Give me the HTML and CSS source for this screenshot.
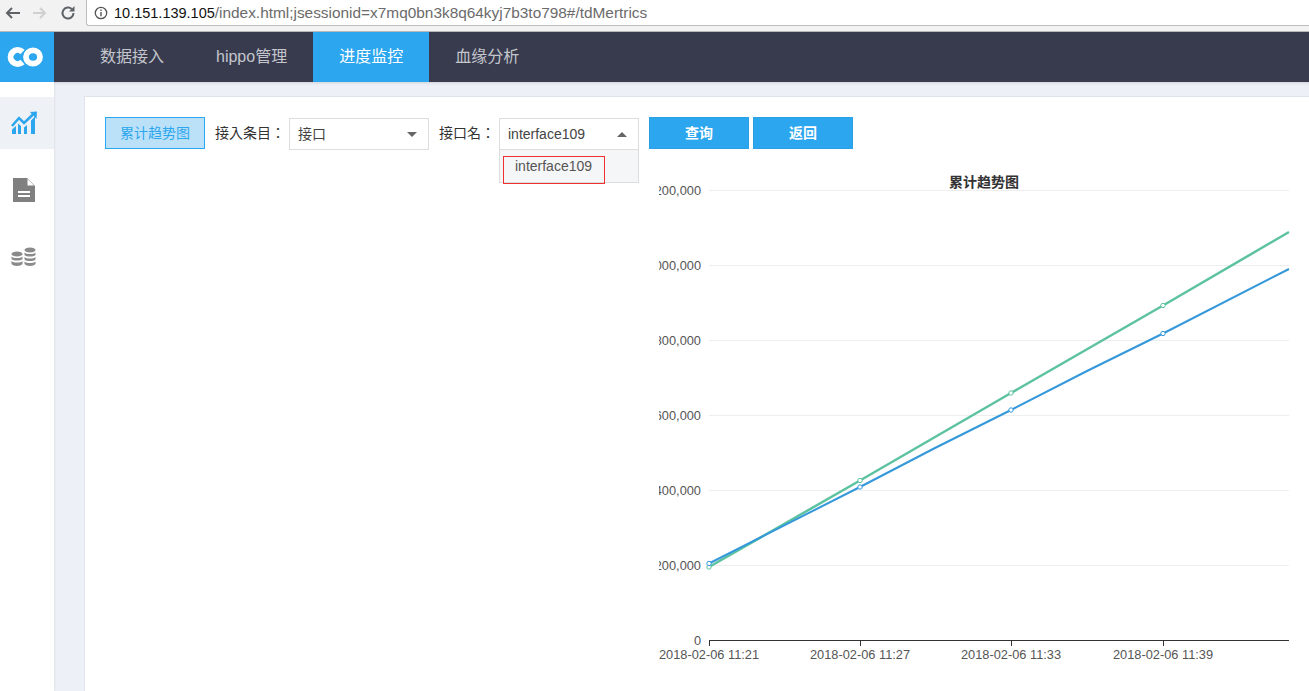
FILE: index.html
```html
<!DOCTYPE html>
<html lang="zh-CN">
<head>
    <meta charset="UTF-8">
    <title>进度监控</title>
    <link rel="stylesheet" href="styles.css">
</head>
<body>
    <div class="browser">
        <div class="browser-btns">
            <svg width="16" height="14" viewBox="0 0 16 14"><path d="M16 7H3M8 2L3 7l5 5" fill="none" stroke="#5f6368" stroke-width="2"/></svg>
            <svg width="16" height="14" viewBox="0 0 16 14"><path d="M1 7h12M8 2l5 5-5 5" fill="none" stroke="#d0d0d0" stroke-width="2"/></svg>
            <svg width="16" height="16" viewBox="0 0 16 16"><path d="M13.500 8a5.500 5.500 0 1 1-1.600-3.900" fill="none" stroke="#5f6368" stroke-width="2"/><path d="M14.500 1v5.500H9z" fill="#5f6368"/></svg>
        </div>
        <div class="urlbar">
            <svg width="14" height="14" viewBox="0 0 14 14"><circle cx="7" cy="7" r="5.700" fill="none" stroke="#555" stroke-width="1.300"/><path d="M7 6v4.200M7 3.600v1.300" stroke="#555" stroke-width="1.400"/></svg>
            <span class="url"><span class="host">10.151.139.105</span>/index.html;jsessionid=x7mq0bn3k8q64kyj7b3to798#/tdMertrics</span>
        </div>
    </div>

    <div class="topnav">
        <div class="logo">
            <svg width="36" height="20" viewBox="0 0 36 20">
                <path d="M15.500 5a7 7 0 1 0 0 10" fill="none" stroke="#fff" stroke-width="6"/>
                <ellipse cx="26" cy="10" rx="7" ry="6.700" fill="none" stroke="#fff" stroke-width="5.800"/>
            </svg>
        </div>
        <a class="nav-item">数据接入</a>
        <a class="nav-item">hippo管理</a>
        <a class="nav-item active">进度监控</a>
        <a class="nav-item">血缘分析</a>
    </div>

    <div class="layout">
        <div class="sidebar">
            <div class="side-item active">
                <svg width="26" height="24" viewBox="0 0 26 24" fill="#2ca6ee">
                    <path d="M1 18.500l4-3.500V23H1zM7 12.500l3 2.500v8H7zM13 16.500l3-2.500v9h-3zM20 9.500l4-4V23h-4z"/>
                    <path d="M1 15l7-8 5 5 9-8.500" fill="none" stroke="#2ca6ee" stroke-width="2.500"/>
                    <path d="M19 1l7-.5-.5 7.500z"/>
                </svg>
            </div>
            <div class="side-item">
                <svg width="22" height="24" viewBox="0 0 22 24">
                    <path d="M0 0h14l8 8v16H0z" fill="#808080"/>
                    <path d="M14.500 1l6.500 6.500h-6.500z" fill="#fff"/>
                    <path d="M5 13h12v2H5zM5 17h12v2H5z" fill="#fff"/>
                </svg>
            </div>
            <div class="side-item">
                <svg width="26" height="20" viewBox="0 0 26 20" fill="#8a8a8a">
                    <ellipse cx="6" cy="7" rx="5.500" ry="2.500"/>
                    <path d="M.5 9.500c2 2 9 2 11 0V12c-2 2-9 2-11 0zM.5 14c2 2 9 2 11 0v3c-2 2.500-9 2.500-11 0z"/>
                    <ellipse cx="19" cy="3" rx="5.500" ry="2.500"/>
                    <path d="M13.500 5.500c2 2 9 2 11 0V8c-2 2-9 2-11 0zM13.500 10c2 2 9 2 11 0v2.500c-2 2-9 2-11 0zM13.500 14.500c2 2 9 2 11 0V17c-2 2.500-9 2.500-11 0z"/>
                </svg>
            </div>
        </div>

        <div class="main">
            <div class="panel">
                <div class="toolbar">
                    <div class="tag">累计趋势图</div>
                    <label class="field-label" lang="zh-TW">接入条目：</label>
                    <div class="select">
                        <span>接口</span>
                        <i class="caret"></i>
                    </div>
                    <label class="field-label" lang="zh-TW">接口名：</label>
                    <div class="select open">
                        <span>interface109</span>
                        <i class="caret up"></i>
                        <div class="dropdown">
                            <div class="option">interface109</div>
                        </div>
                    </div>
                    <button class="btn">查询</button>
                    <button class="btn">返回</button>
                </div>

                <svg class="chart" width="650" height="500" viewBox="659 170 650 500">
                    <text class="chart-title" x="984" y="187">累计趋势图</text>
                    <g class="grid">
                        <path d="M709 190.500H1289M709 265.500H1289M709 340.500H1289M709 415.500H1289M709 490.500H1289M709 565.500H1289"/>
                    </g>
                    <path class="axis" d="M709 640.500H1289M709.500 640v6M860.500 640v6M1011.500 640v6M1163.500 640v6"/>
                    <g class="ylabels">
                        <text x="701" y="195">1,200,000</text>
                        <text x="701" y="270">1,000,000</text>
                        <text x="701" y="345">800,000</text>
                        <text x="701" y="420">600,000</text>
                        <text x="701" y="495">400,000</text>
                        <text x="701" y="570">200,000</text>
                        <text x="701" y="645">0</text>
                    </g>
                    <g class="xlabels">
                        <text x="709" y="659">2018-02-06 11:21</text>
                        <text x="860" y="659">2018-02-06 11:27</text>
                        <text x="1011" y="659">2018-02-06 11:33</text>
                        <text x="1163" y="659">2018-02-06 11:39</text>
                    </g>
                    <polyline class="line green" points="709,567 860,480.500 1011,393 1163,305.500 1289,232"/>
                    <polyline class="line blue" points="709,563.500 860,487 935,448 1011,410 1087,371 1163,333.500 1289,269"/>
                    <g class="dots green-dot">
                        <circle cx="709" cy="567" r="2.200"/>
                        <circle cx="860" cy="480.500" r="2.200"/>
                        <circle cx="1011" cy="393" r="2.200"/>
                        <circle cx="1163" cy="305.500" r="2.200"/>
                    </g>
                    <g class="dots blue-dot">
                        <circle cx="709" cy="563.500" r="2.200"/>
                        <circle cx="860" cy="487" r="2.200"/>
                        <circle cx="1011" cy="410" r="2.200"/>
                        <circle cx="1163" cy="333.500" r="2.200"/>
                    </g>
                </svg>
            </div>
        </div>
    </div>
</body>
</html>
```

FILE: styles.css
```css
* {
    box-sizing: border-box;
}
html, body {
    height: 691px;
    overflow: hidden;
}
body {
    margin: 0;
    font-family: "Liberation Sans", "Noto Sans CJK SC", sans-serif;
    font-size: 14px;
    color: #333;
    background-color: #edf0f6;
}

/* browser chrome */
.browser {
    display: flex;
    height: 32px;
    padding-bottom: 5px;
    background-color: #f2f2f2;
    border-bottom: 1px solid #b8b8b8;
}
.browser-btns {
    flex: none;
    display: flex;
    align-items: center;
    gap: 12px;
    width: 86px;
    padding-left: 4px;
}
.urlbar {
    flex: 1;
    display: flex;
    align-items: center;
    gap: 6px;
    padding-left: 7px;
    background-color: #fff;
    border: 1px solid #bdbdbd;
    border-top: none;
    border-right: none;
    border-radius: 0 0 0 3px;
}
.url {
    font-size: 15.400px;
    color: #6b6b6b;
}
.host {
    font-size: 14.500px;
    color: #111;
}

/* top nav */
.topnav {
    display: flex;
    height: 50px;
    background-color: #383b4e;
}
.logo {
    display: flex;
    align-items: center;
    justify-content: center;
    width: 54px;
    margin-right: 20px;
    padding-right: 4px;
    background-color: #2ca6ee;
}
.nav-item {
    display: flex;
    align-items: center;
    padding: 0 26px 5px;
    font-size: 16px;
    color: #c4c6cc;
}
.nav-item.active {
    color: #fff;
    background-color: #2ca6ee;
}

.layout {
    display: flex;
    height: 609px;
}
.sidebar {
    flex: none;
    width: 54px;
    padding-top: 15px;
    background-color: #fff;
    box-shadow: 1px 0 2px rgba(0,0,0,0.05);
}
.side-item {
    display: flex;
    align-items: center;
    justify-content: center;
    height: 52px;
    margin-bottom: 15px;
    padding-right: 6px;
}
.side-item.active {
    background-color: #eef1f6;
}
.main {
    flex: 1;
    min-width: 0;
    padding: 14px 0 0 30px;
    box-shadow: inset 0 3px 3px -2px rgba(0,0,0,0.12);
}
.panel {
    height: 100%;
    padding: 20px 20px 0;
    background-color: #fff;
    border: 1px solid #dfe4ec;
    border-right: none;
    border-bottom: none;
}

/* toolbar */
.toolbar {
    display: flex;
    align-items: flex-start;
    height: 33px;
}
.toolbar > * {
    flex: none;
}
.tag {
    width: 100px;
    height: 32px;
    margin-right: 10px;
    line-height: 30px;
    text-align: center;
    font-size: 14px;
    color: #2ca6ee;
    background-color: #bbe1f9;
    border: 1px solid #2ca6ee;
}
.field-label {
    margin-right: 4px;
    line-height: 32px;
    font-family: "Liberation Sans", "Noto Sans CJK TC", sans-serif;
    font-size: 14px;
    white-space: nowrap;
}
.select {
    position: relative;
    width: 140px;
    height: 32px;
    margin-top: 1px;
    margin-right: 10px;
    padding-left: 8px;
    line-height: 30px;
    color: #444;
    background-color: #fff;
    border: 1px solid #ddd;
}
.caret {
    position: absolute;
    top: 13px;
    right: 11px;
    border-left: 5px solid transparent;
    border-right: 5px solid transparent;
    border-top: 5px solid #666;
}
.caret.up {
    border-top: none;
    border-bottom: 5px solid #666;
}
.dropdown {
    position: absolute;
    top: 30px;
    left: -1px;
    width: 140px;
    height: 34px;
    padding: 6px 0 0 3px;
    background-color: #f5f6f8;
    border: 1px solid #ddd;
}
.option {
    width: 102px;
    height: 28px;
    padding-left: 11px;
    line-height: 18px;
    color: #555;
    border: 1px solid #f03030;
}
.btn {
    width: 100px;
    height: 32px;
    margin-right: 4px;
    padding: 0 0 2px;
    font-family: inherit;
    font-size: 14px;
    font-weight: bold;
    color: #fff;
    background-color: #2ca6ee;
    border: 1px solid #2a9fe3;
    cursor: pointer;
}

/* chart */
.chart {
    display: block;
    margin: 20px 0 0 554px;
    font-size: 12.800px;
    fill: #555;
}
.chart-title {
    text-anchor: middle;
    font-size: 14px;
    font-weight: bold;
    fill: #333;
}
.grid path {
    fill: none;
    stroke: #eee;
}
.axis {
    fill: none;
    stroke: #333;
}
.ylabels text {
    text-anchor: end;
}
.xlabels text {
    text-anchor: middle;
}
.line {
    fill: none;
}
.line.green {
    stroke: #5cc2a0;
    stroke-width: 2.500;
}
.line.blue {
    stroke: #3498db;
    stroke-width: 2;
}
.dots circle {
    fill: #fff;
    stroke-width: 1;
}
.green-dot circle {
    stroke: #5cc2a0;
}
.blue-dot circle {
    stroke: #3498db;
}
```
